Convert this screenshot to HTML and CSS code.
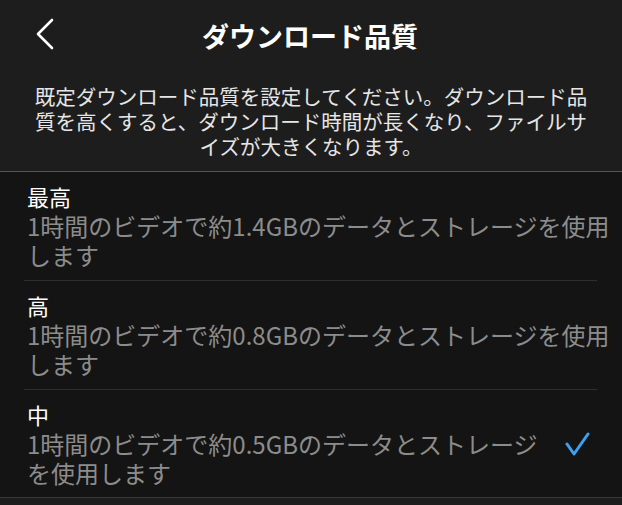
FILE: index.html
```html
<!DOCTYPE html>
<html lang="ja">
  <head>
    <meta charset="UTF-8">
    <meta name="viewport" content="width=device-width, initial-scale=1.0">
    <title>ダウンロード品質</title>
    <link rel="stylesheet" href="styles.css">
  </head>
  <body>
    <header class="top">
      <div class="bar">
        <button class="back" aria-label="戻る">
          <svg width="20" height="32" viewBox="0 0 20 32">
            <polyline points="16,2 2,16 16,30" fill="none" stroke="#fff" stroke-width="2.6" stroke-linecap="round" stroke-linejoin="round"/>
          </svg>
        </button>
        <h1 class="title">ダウンロード品質</h1>
      </div>
      <p class="intro">既定ダウンロード品質を設定してください。ダウンロード品質を高くすると、ダウンロード時間が長くなり、ファイルサイズが大きくなります。</p>
    </header>

    <ul class="options">
      <li class="option">
        <div class="text">
          <div class="name">最高</div>
          <div class="desc">1時間のビデオで約1.4GBのデータとストレージを使用します</div>
        </div>
      </li>
      <li class="sep"></li>
      <li class="option">
        <div class="text">
          <div class="name">高</div>
          <div class="desc">1時間のビデオで約0.8GBのデータとストレージを使用します</div>
        </div>
      </li>
      <li class="sep"></li>
      <li class="option selected">
        <div class="text">
          <div class="name">中</div>
          <div class="desc">1時間のビデオで約0.5GBのデータとストレージを使用します</div>
        </div>
        <svg class="check" width="26" height="26" viewBox="0 0 26 26">
          <polyline points="3,13 10,23 24,3" fill="none" stroke="#3fa0f2" stroke-width="3" stroke-linecap="round" stroke-linejoin="round"/>
        </svg>
      </li>
    </ul>
  </body>
</html>
```

FILE: styles.css
```css
body {
  margin: 0;
  background-color: #1d1d1d;
  color: #fff;
  font-family: "Noto Sans CJK JP", "Noto Sans", sans-serif;
}
.top {
  background-color: #1d1d1d;
  border-bottom: 1px solid #555;
}
.bar {
  display: flex;
  align-items: center;
  justify-content: center;
  height: 71px;
  padding: 0 24px;
}
.back {
  display: flex;
  margin: -3px auto 0 0;
  padding: 0 0 0 12px;
  background: none;
  border: none;
}
.title {
  margin: 0 auto 0 0;
  transform: translateX(-17px);
  font-size: 27px;
  font-weight: bold;
  line-height: 36px;
}
.intro {
  margin: 0;
  padding: 13px 28px 12px;
  font-size: 20.5px;
  line-height: 25px;
  text-align: center;
  color: #e6e6e6;
}
.options {
  list-style: none;
  margin: 0;
  padding: 0;
  background-color: #141414;
  border-bottom: 1px solid #3a3a3a;
}
.option {
  display: flex;
  align-items: center;
  padding: 10px 12px 11px 27px;
}
.option.selected {
  padding-bottom: 10px;
}
.text {
  flex: 1;
}
.name {
  font-size: 22px;
  line-height: 29px;
}
.desc {
  font-size: 24px;
  line-height: 29px;
  color: #8c8c8c;
}
.check {
  flex-shrink: 0;
  margin: 0 20px 0 22px;
}
.sep {
  height: 1px;
  margin: 0 25px 0 24px;
  background-color: #2e2e2e;
}
```
